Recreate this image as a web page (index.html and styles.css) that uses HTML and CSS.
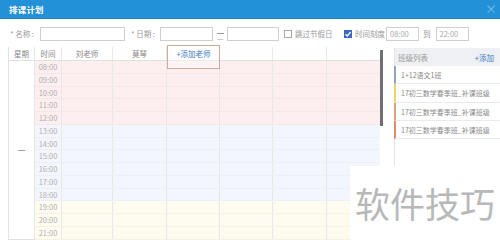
FILE: index.html
```html
<!DOCTYPE html>
<html lang="zh">
<head>
<meta charset="utf-8">
<title>排课计划</title>
<link rel="stylesheet" href="styles.css">
</head>
<body>
<div class="dialog">
  <div class="titlebar">
    <span class="title">排课计划</span>
    <span class="close">×</span>
  </div>
  <div class="form">
    <span class="label lbl-name">* 名称 :</span>
    <span class="input in-name"></span>
    <span class="label lbl-date">* 日期 :</span>
    <span class="input in-date"></span>
    <span class="dash">—</span>
    <span class="input in-date2"></span>
    <span class="check"></span>
    <span class="label lbl-skip">跳过节假日</span>
    <span class="check checked"><svg viewBox="0 0 8 8" width="8" height="8"><path d="M1.5 4.2 L3.3 6 L6.6 2" fill="none" stroke="#fff" stroke-width="1.3"/></svg></span>
    <span class="label lbl-scale">时间刻度</span>
    <span class="input in-time">08:00</span>
    <span class="label lbl-to">到</span>
    <span class="input in-time">22:00</span>
  </div>
  <div class="main">
    <div class="table">
      <div class="week-col">
        <div class="hcell">星期</div>
        <div class="week-body">一</div>
      </div>
      <div class="rows-col">
        <div class="row head">
          <div class="c t">时间</div>
          <div class="c w1">刘老师</div>
          <div class="c w2">莫琴</div>
          <div class="c w3 add"><span class="add-btn">+添加老师</span></div>
          <div class="c w4"></div>
          <div class="c w5"></div>
          <div class="c w6"></div>
        </div>
        <div class="row pink"><div class="c t">08:00</div><div class="c w1"></div><div class="c w2"></div><div class="c w3"></div><div class="c w4"></div><div class="c w5"></div><div class="c w6"></div></div>
        <div class="row pink"><div class="c t">09:00</div><div class="c w1"></div><div class="c w2"></div><div class="c w3"></div><div class="c w4"></div><div class="c w5"></div><div class="c w6"></div></div>
        <div class="row pink"><div class="c t">10:00</div><div class="c w1"></div><div class="c w2"></div><div class="c w3"></div><div class="c w4"></div><div class="c w5"></div><div class="c w6"></div></div>
        <div class="row pink"><div class="c t">11:00</div><div class="c w1"></div><div class="c w2"></div><div class="c w3"></div><div class="c w4"></div><div class="c w5"></div><div class="c w6"></div></div>
        <div class="row pink"><div class="c t">12:00</div><div class="c w1"></div><div class="c w2"></div><div class="c w3"></div><div class="c w4"></div><div class="c w5"></div><div class="c w6"></div></div>
        <div class="row blue"><div class="c t">13:00</div><div class="c w1"></div><div class="c w2"></div><div class="c w3"></div><div class="c w4"></div><div class="c w5"></div><div class="c w6"></div></div>
        <div class="row blue"><div class="c t">14:00</div><div class="c w1"></div><div class="c w2"></div><div class="c w3"></div><div class="c w4"></div><div class="c w5"></div><div class="c w6"></div></div>
        <div class="row blue"><div class="c t">15:00</div><div class="c w1"></div><div class="c w2"></div><div class="c w3"></div><div class="c w4"></div><div class="c w5"></div><div class="c w6"></div></div>
        <div class="row blue"><div class="c t">16:00</div><div class="c w1"></div><div class="c w2"></div><div class="c w3"></div><div class="c w4"></div><div class="c w5"></div><div class="c w6"></div></div>
        <div class="row blue"><div class="c t">17:00</div><div class="c w1"></div><div class="c w2"></div><div class="c w3"></div><div class="c w4"></div><div class="c w5"></div><div class="c w6"></div></div>
        <div class="row blue"><div class="c t">18:00</div><div class="c w1"></div><div class="c w2"></div><div class="c w3"></div><div class="c w4"></div><div class="c w5"></div><div class="c w6"></div></div>
        <div class="row yellow"><div class="c t">19:00</div><div class="c w1"></div><div class="c w2"></div><div class="c w3"></div><div class="c w4"></div><div class="c w5"></div><div class="c w6"></div></div>
        <div class="row yellow"><div class="c t">20:00</div><div class="c w1"></div><div class="c w2"></div><div class="c w3"></div><div class="c w4"></div><div class="c w5"></div><div class="c w6"></div></div>
        <div class="row yellow"><div class="c t">21:00</div><div class="c w1"></div><div class="c w2"></div><div class="c w3"></div><div class="c w4"></div><div class="c w5"></div><div class="c w6"></div></div>
      </div>
    </div>
    <div class="scroll"><div class="thumb"></div></div>
    <div class="panel">
      <div class="panel-head"><span>班级列表</span><span class="panel-add">+添加</span></div>
      <div class="item c-blue">1+12语文1班</div>
      <div class="item c-yellow">17初三数学春季班_补课班级</div>
      <div class="item c-orange">17初三数学春季班_补课班级</div>
      <div class="item c-red">17初三数学春季班_补课班级</div>
    </div>
  </div>
  <div class="watermark">软件技巧</div>
</div>
</body>
</html>
```

FILE: styles.css
```css
* { box-sizing: border-box; }
html, body { margin: 0; padding: 0; }
body {
  width: 500px;
  height: 240px;
  overflow: hidden;
  background: #fff;
  font-family: "Noto Sans CJK SC", "Noto Sans", "Liberation Sans", sans-serif;
  color: #999;
}
.dialog {
  position: relative;
  width: 500px;
  height: 240px;
  overflow: hidden;
}
.titlebar {
  height: 19px;
  background: #2391d8;
  display: flex;
  align-items: center;
  justify-content: space-between;
  padding: 0 3px 0 9px;
  border-bottom: 1px solid #1b86cc;
}
.title {
  color: #fff;
  font-size: 8.5px;
  font-weight: bold;
  letter-spacing: 0.2px;
}
.close {
  color: #7cc0ee;
  font-size: 12px;
  line-height: 1;
}
.form {
  display: flex;
  align-items: center;
  height: 28px;
  padding: 8px 0 7px 10px;
  font-size: 7.5px;
}
.label { color: #999; white-space: nowrap; }
.input {
  height: 14px;
  border: 1px solid #cfcfcf;
  background: #fff;
  color: #aaa;
  font-size: 7.5px;
  line-height: 12px;
  padding-left: 3px;
}
.lbl-name { width: 30px; }
.in-name { width: 85px; }
.lbl-date { margin-left: 6px; width: 29px; }
.in-date { width: 53px; }
.dash {
  width: 7px;
  height: 1px;
  background: #999;
  margin: 0 3px 0 4px;
}
.in-date2 { width: 52px; }
.check {
  width: 8px;
  height: 8px;
  border: 1px solid #aaa;
  background: #fff;
  margin-left: 5px;
  margin-right: 3px;
  display: flex;
  font-size: 0;
}
.check.checked {
  background: #3a69c2;
  border-color: #3a69c2;
  margin-left: 12px;
}
.check svg { display: block; margin: -1px; }
.lbl-skip { width: 37px; }
.lbl-scale { width: 31px; }
.in-time { width: 33px; }
.lbl-to { margin: 0 5px 0 4px; }
.main {
  display: flex;
  padding-left: 8px;
}
.table {
  display: flex;
  width: 372px;
  border-left: 1px solid #e2e2e2;
  border-bottom: 1px solid #e2e2e2;
  height: 193px;
}
.week-col {
  width: 27px;
  border-right: 1px solid #e6e6e6;
  display: flex;
  flex-direction: column;
}
.hcell {
  height: 14px;
  border-bottom: 1px solid #e0e0e0;
  font-size: 7.5px;
  color: #888;
  text-align: center;
  line-height: 13px;
}
.week-body {
  flex: 1;
  display: flex;
  align-items: center;
  justify-content: center;
  font-size: 8px;
  color: #777;
}
.rows-col {
  flex: 1;
  display: flex;
  flex-direction: column;
}
.row {
  display: flex;
  height: 12.75px;
  border-bottom: 1px dotted #efe0e0;
}
.row.head {
  height: 14px;
  border-bottom: 1px solid #e0e0e0;
  background: #fff;
}
.row.pink { background: #fdeff0; }
.row.blue { background: #f4f6fd; border-bottom-color: #e6e8f3; }
.row.yellow { background: #fefcf1; border-bottom-color: #f0e8d4; }
.c {
  border-right: 1px solid #e8e8e8;
  font-size: 7.5px;
  text-align: center;
  line-height: 12px;
}
.row.head .c { color: #888; line-height: 13px; }
.c.t { width: 27px; color: #b0b0b0; }
.c.w1 { width: 51px; }
.c.w2 { width: 54px; }
.c.w3 { width: 53px; }
.c.w4 { width: 53px; }
.c.w5 { width: 54px; }
.c.w6 { width: 53px; border-right: none; }
.add { position: relative; }
.add-btn {
  position: absolute;
  left: 0;
  top: -2px;
  width: 53px;
  height: 24px;
  border: 1px solid #cfa99a;
  color: #3a7bc8;
  font-size: 7.5px;
  line-height: 15px;
  text-align: center;
  background: rgba(255,255,255,0.35);
}
.scroll {
  width: 3px;
  padding-top: 3px;
}
.thumb {
  width: 3px;
  height: 76px;
  background: #6f6f6f;
}
.panel {
  margin-left: 11px;
  width: 106px;
  height: 193px;
  margin-top: 1px;
  border-left: 1px solid #e4e4e4;
  font-size: 7px;
}
.panel-head {
  height: 18px;
  background: #eef0f3;
  display: flex;
  align-items: center;
  justify-content: space-between;
  padding: 0 6px 0 3px;
  color: #999;
  font-size: 7.5px;
}
.panel-add { color: #3a7bc8; }
.item {
  height: 18.3px;
  line-height: 18px;
  border-left: 2px solid #8ea3c0;
  border-bottom: 1px solid #eaeaea;
  padding-left: 5px;
  margin-left: -1px;
  color: #888;
  white-space: nowrap;
}
.item.c-yellow { border-left-color: #efd36a; }
.item.c-orange { border-left-color: #dca07c; }
.item.c-red { border-left-color: #df8a6a; }
.watermark {
  position: absolute;
  left: 350px;
  top: 166px;
  width: 150px;
  height: 74px;
  background: #fff;
  color: #b8b8b8;
  font-size: 35px;
  line-height: 74px;
  padding-left: 5px;
  letter-spacing: 0;
  font-family: "Noto Sans CJK SC", sans-serif;
}
```
